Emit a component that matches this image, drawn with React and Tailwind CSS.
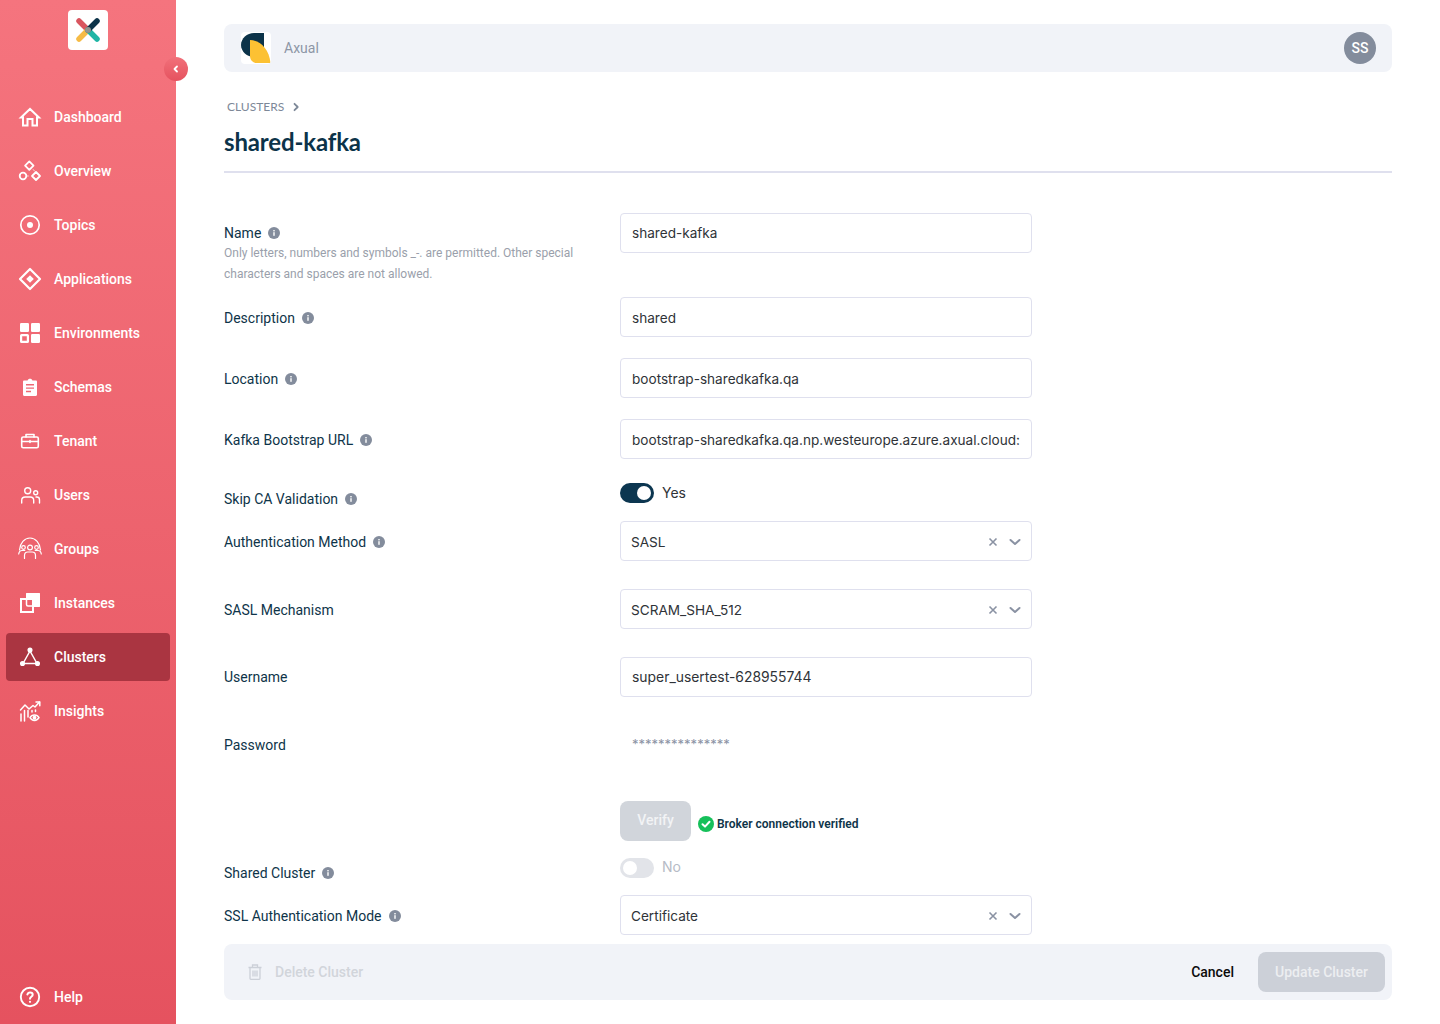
import React from 'react';

const iconProps = { width: 24, height: 24, viewBox: '0 0 24 24', fill: 'none', stroke: 'white', strokeWidth: 1.7, strokeLinejoin: 'round', strokeLinecap: 'round' };

const HomeIcon = () => (
  <svg {...iconProps} strokeWidth={2} strokeLinejoin="miter" strokeLinecap="butt"><path d="M3 12.500 12 4l9 8.500H19V20.500h-4.500V14h-5v6.500H5v-8Z" /></svg>
);
const OverviewIcon = () => (
  <svg {...iconProps} strokeWidth={1.8}>
    <path d="M11.300 2.400 15.500 6.600 11.300 10.800 7.100 6.600Z" />
    <circle cx="5" cy="17" r="3.300" />
    <path d="M18 13 22 17 18 21 14 17Z" />
    <path d="M8.800 17h1.600M15.200 10.500l1.300 1.500" strokeWidth={0.7} />
  </svg>
);
const TopicsIcon = () => (
  <svg {...iconProps}><circle cx="12" cy="12" r="9.200" /><circle cx="12" cy="12" r="3" fill="white" stroke="none" /></svg>
);
const AppsIcon = () => (
  <svg {...iconProps} strokeWidth={2.200}>
    <path d="M12 2 22 12 12 22 2 12Z" />
    <path d="M12 8.200 15.800 12 12 15.800 8.200 12Z" fill="white" stroke="none" />
  </svg>
);
const EnvIcon = () => (
  <svg width="24" height="24" viewBox="0 0 24 24" fill="white">
    <rect x="2" y="2" width="9" height="9" rx="1.200" />
    <rect x="13" y="2" width="9" height="9" rx="1.200" />
    <rect x="13" y="13" width="9" height="9" rx="1.200" />
    <rect x="3.100" y="14.100" width="6.800" height="6.800" rx="0.500" fill="none" stroke="white" strokeWidth="2.200" />
  </svg>
);
const SchemaIcon = () => (
  <svg width="24" height="24" viewBox="0 0 24 24" fill="white">
    <path fillRule="evenodd" d="M6.200 5.500H9.600C9.900 4.400 10.800 3.800 12 3.800s2.100.6 2.400 1.700h3.400c.7 0 1.200.5 1.200 1.200v13.100c0 .7-.5 1.200-1.200 1.200H6.200c-.7 0-1.200-.5-1.200-1.200V6.700c0-.7.5-1.200 1.200-1.200ZM8 9v1.400h8V9H8Zm0 3.400v1.400h8v-1.400H8Zm0 3.400v1.400h5v-1.400H8Z" />
  </svg>
);
const TenantIcon = () => (
  <svg {...iconProps} strokeWidth={1.600}>
    <rect x="3.700" y="8" width="16.600" height="10.800" rx="1.500" />
    <path d="M8 8V5.500h8V8M3.700 12.500h16.600M12 11.500v2" />
  </svg>
);
const UsersIcon = () => (
  <svg {...iconProps} strokeWidth={1.400}>
    <circle cx="9.700" cy="7.700" r="3" />
    <path d="M3.700 20v-2.500c0-2 1.500-3.500 3.500-3.500h5c2 0 3.500 1.500 3.500 3.500V20" />
    <circle cx="17.700" cy="9.700" r="2" />
    <path d="M18 14h.8c1.500 0 2.700 1.200 2.700 2.700V20" />
  </svg>
);
const GroupsIcon = () => (
  <svg {...iconProps} strokeWidth={1.200}>
    <path d="M1.500 13C2 6 6.500 1 12 1s10 5 10.500 12" />
    <circle cx="12" cy="10.500" r="2.400" />
    <circle cx="5.500" cy="10.500" r="1.800" />
    <circle cx="18.500" cy="10.500" r="1.800" />
    <path d="M6.500 21.500v-3c0-2 1.300-3.500 3.300-3.500h4.400c2 0 3.300 1.500 3.300 3.500v3" />
    <path d="M.7 17c.3-2 1.700-3.500 3.300-3.500h2.800M23.300 17c-.3-2-1.700-3.500-3.300-3.500h-2.800" />
  </svg>
);
const InstancesIcon = () => (
  <svg width="24" height="24" viewBox="0 0 24 24" fill="none">
    <path d="M8 2.500c0-.3.2-.5.500-.5h13c.3 0 .5.2.5.5V15.500c0 .3-.2.500-.5.500H16V8.500c0-.8-.7-1.500-1.500-1.500H8V2.500Z" fill="white" />
    <rect x="3" y="8" width="12" height="13" stroke="white" strokeWidth="2" />
    <path d="M8.500 8v5.500c0 .8.700 1.500 1.500 1.500H15" stroke="white" strokeWidth="1.500" />
  </svg>
);
const ClustersIcon = () => (
  <svg {...iconProps} strokeWidth={1.500}>
    <path d="M12 6 5 18.500h14Z" />
    <circle cx="12" cy="5" r="1.800" fill="white" />
    <circle cx="4.500" cy="18.500" r="1.800" fill="white" />
    <circle cx="19.500" cy="18.500" r="1.800" fill="white" />
  </svg>
);
const InsightsIcon = () => (
  <svg {...iconProps} strokeWidth={1.500}>
    <path d="M3 22v-7M6.500 22V11.500M10 18v-6.500" />
    <path d="M2.500 11 7 6l4 4 4-3.500 2 1.500 4.500-5" />
    <path d="M18 3h3.800v3.800" />
    <path d="M12 18.700c1-1.800 2.600-2.700 4.500-2.700s3.500.9 4.500 2.700c-1 1.800-2.600 2.700-4.500 2.700s-3.500-.9-4.500-2.700Z" />
    <circle cx="16.500" cy="18.700" r="1.200" fill="white" />
    <path d="M14 11.500v1.500M17.500 11v1.500" />
  </svg>
);
const HelpIcon = () => (
  <svg {...iconProps} strokeWidth={1.900}>
    <circle cx="12" cy="12" r="9.200" />
    <path d="M9.400 9.500c.3-1.400 1.300-2.100 2.700-2.100 1.500 0 2.600.9 2.600 2.300 0 2.100-2.700 2.100-2.700 4.100" strokeWidth={2} />
    <circle cx="12" cy="16.800" r="1.100" fill="white" stroke="none" />
  </svg>
);

const navItems = [
  { label: 'Dashboard', icon: HomeIcon },
  { label: 'Overview', icon: OverviewIcon },
  { label: 'Topics', icon: TopicsIcon },
  { label: 'Applications', icon: AppsIcon },
  { label: 'Environments', icon: EnvIcon },
  { label: 'Schemas', icon: SchemaIcon },
  { label: 'Tenant', icon: TenantIcon },
  { label: 'Users', icon: UsersIcon },
  { label: 'Groups', icon: GroupsIcon },
  { label: 'Instances', icon: InstancesIcon },
  { label: 'Clusters', icon: ClustersIcon, active: true },
  { label: 'Insights', icon: InsightsIcon },
];

function NavItem({ label, icon: Icon, active }) {
  return (
    <div className={`flex h-12 items-center gap-3 rounded pl-3 text-sm font-medium text-white ${active ? 'bg-[#aa3541]' : ''}`}>
      <Icon />
      <span>{label}</span>
    </div>
  );
}

function Sidebar() {
  return (
    <aside className="relative flex h-screen w-[176px] shrink-0 flex-col bg-gradient-to-b from-[#f5747e] to-[#e5525f] px-1.5 pb-[3px] pt-2.5 font-['Roboto',sans-serif]">
      <div className="mx-auto flex h-10 w-10 items-center justify-center rounded bg-white">
        <svg width="40" height="40" viewBox="0 0 40 40" fill="none" strokeWidth="5.500" strokeLinecap="round">
          <path d="M11 11 20 20" stroke="#d9555f" />
          <path d="M20 20 11 29" stroke="#f6bb45" />
          <path d="M20 20 29 29" stroke="#1fb5a5" />
          <path d="M20 20 29 11" stroke="#0c3349" />
          <circle cx="20" cy="20" r="3" fill="#93958f" />
        </svg>
      </div>
      <button className="absolute left-[164px] top-[57px] flex h-6 w-6 items-center justify-center rounded-full bg-gradient-to-b from-[#f1707a] to-[#e5525f]">
        <svg width="10" height="10" viewBox="0 0 10 10" fill="none" stroke="white" strokeWidth="1.800" strokeLinecap="round" strokeLinejoin="round">
          <path d="M6 2.500 3.500 5 6 7.500" />
        </svg>
      </button>
      <nav className="mt-[43px] flex flex-col gap-1.5">
        {navItems.map((item) => (
          <NavItem key={item.label} {...item} />
        ))}
      </nav>
      <div className="mt-auto">
        <NavItem label="Help" icon={HelpIcon} />
      </div>
    </aside>
  );
}

const InfoDot = () => (
  <span className="ml-[7px] inline-flex h-3 w-3 items-center justify-center rounded-full bg-[#838c9c]">
    <svg width="12" height="12" viewBox="0 0 12 12" fill="white">
      <rect x="5.300" y="5.200" width="1.400" height="3.600" />
      <rect x="5.300" y="3" width="1.400" height="1.400" />
    </svg>
  </span>
);

function Label({ text, info = true, className = 'pt-[11px]' }) {
  return (
    <div className={`box-content flex h-[20px] items-center text-sm text-[#0e3449] ${className}`}>
      <span>{text}</span>
      {info && <InfoDot />}
    </div>
  );
}

function TextInput({ value, className = 'text-[13.6px]' }) {
  return (
    <input
      readOnly
      value={value}
      className={`h-10 w-[412px] rounded border border-[#dfe0ee] bg-white px-[11px] font-['Inter',sans-serif] text-[#2f3338] outline-none ${className}`}
    />
  );
}

function SelectBox({ value }) {
  return (
    <div className="flex h-10 w-[412px] items-center rounded border border-[#dfe0ee] bg-white pl-2.5 pr-[9px] pt-0.5 font-['Inter',sans-serif] text-[13.6px] text-[#2f3338]">
      <span className="flex-1">{value}</span>
      <svg width="10" height="10" viewBox="0 0 10 10" fill="none" stroke="#8a92a3" strokeWidth="1.600">
        <path d="M1.500 1.500l7 7M8.500 1.500l-7 7" />
      </svg>
      <svg className="ml-2.5" width="14" height="14" viewBox="0 0 14 14" fill="none" stroke="#8a92a3" strokeWidth="2" strokeLinecap="round" strokeLinejoin="round">
        <path d="M2.500 5 7 9l4.500-4" />
      </svg>
    </div>
  );
}

function Toggle({ on, text }) {
  return (
    <div className="flex items-start gap-2">
      <div className={`flex h-5 w-[34px] items-center rounded-full px-[3px] ${on ? 'justify-end bg-[#0c3650]' : 'bg-[#e2e4e9]'}`}>
        <div className="h-3.5 w-3.5 rounded-full bg-white" />
      </div>
      <span className={`font-['Inter',sans-serif] text-sm ${on ? 'leading-[20px] text-[#2f3338]' : 'leading-[18px] text-[#b6bbc6]'}`}>{text}</span>
    </div>
  );
}

function Row({ height, label, children }) {
  return (
    <div className={`grid grid-cols-[396px_412px] ${height}`}>
      <div>{label}</div>
      <div>{children}</div>
    </div>
  );
}

function ClusterForm() {
  return (
    <div className="mt-10 min-h-0 flex-1 font-['Roboto',sans-serif]">
      <Row
        height="h-[84px]"
        label={
          <>
            <Label text="Name" className="pt-[10px]" />
            <p className="w-[360px] text-xs leading-[21px] text-[#9a9fab]">
              Only letters, numbers and symbols _-. are permitted. Other special characters and spaces are not allowed.
            </p>
          </>
        }
      >
        <TextInput value="shared-kafka" />
      </Row>
      <Row height="h-[61px]" label={<Label text="Description" />}>
        <TextInput value="shared" className="pt-0.5 text-[13.6px]" />
      </Row>
      <Row height="h-[61px]" label={<Label text="Location" />}>
        <TextInput value="bootstrap-sharedkafka.qa" className="pt-0.5 text-[13.6px]" />
      </Row>
      <Row height="h-[61px]" label={<Label text="Kafka Bootstrap URL" />}>
        <TextInput value="bootstrap-sharedkafka.qa.np.westeurope.azure.axual.cloud:9093" className="pt-0.5 text-[13.6px]" />
      </Row>
      <Row height="h-[41px]" label={<Label text="Skip CA Validation" className="pt-[9px]" />}>
        <div className="pt-[3px]">
          <Toggle on text="Yes" />
        </div>
      </Row>
      <Row height="h-[68px]" label={<Label text="Authentication Method" />}>
        <SelectBox value="SASL" />
      </Row>
      <Row height="h-[68px]" label={<Label text="SASL Mechanism" info={false} />}>
        <SelectBox value="SCRAM_SHA_512" />
      </Row>
      <Row height="h-[68px]" label={<Label text="Username" info={false} className="pt-[10px]" />}>
        <TextInput value="super_usertest-628955744" className="text-[13.9px]" />
      </Row>
      <Row height="h-[76px]" label={<Label text="Password" info={false} className="pt-[10px]" />}>
        <div className="px-3 pt-[9px] font-['Inter',sans-serif] text-[13px] leading-[20px] text-[#8a92a3]">***************</div>
      </Row>
      <Row height="h-[57px]">
        <div className="flex items-center">
          <button className="h-10 w-[71px] rounded-lg bg-[#d1d5db] pb-0.5 text-sm font-medium text-[#f2f3f5]">Verify</button>
          <svg className="ml-[7px] mt-1.5" width="16" height="16" viewBox="0 0 16 16" fill="none">
            <circle cx="8" cy="8" r="8" fill="#16c05a" />
            <path d="M4.500 8.300 7 10.600l4.500-4.800" stroke="white" strokeWidth="2" strokeLinecap="round" strokeLinejoin="round" />
          </svg>
          <span className="ml-[3px] mt-1.5 text-xs font-semibold text-[#0e3449]">Broker connection verified</span>
        </div>
      </Row>
      <Row height="h-[37px]" label={<Label text="Shared Cluster" className="pt-[5px]" />}>
        <Toggle text="No" />
      </Row>
      <Row height="h-10" label={<Label text="SSL Authentication Mode" />}>
        <SelectBox value="Certificate" />
      </Row>
    </div>
  );
}

export default function App() {
  return (
    <div className="flex h-screen overflow-hidden bg-white">
      <Sidebar />
      <main className="flex h-screen min-w-0 flex-1 flex-col px-12 pb-6 pt-6">
        <header className="flex h-12 shrink-0 items-center justify-between rounded-lg bg-[#f1f3f8] pl-[17px] pr-4">
          <div className="flex items-center gap-[13px]">
            <div className="h-8 w-[30px] overflow-hidden rounded-sm bg-white">
              <svg width="30" height="32" viewBox="0 0 30 32" fill="none">
                <path d="M23 1H13C6 1 0 6.500 0 13s6 12 13 12h10Z" fill="#0c3349" />
                <path d="M9 8c9 0 19 8 20.500 23H16c-4 0-7-3-7-7Z" fill="#fcc133" />
              </svg>
            </div>
            <span className="font-['Roboto',sans-serif] text-sm text-[#8d96a6]">Axual</span>
          </div>
          <div className="flex h-8 w-8 items-center justify-center rounded-full bg-[#838c9c] font-['Roboto',sans-serif] text-sm font-medium text-white">SS</div>
        </header>

        <div className="mt-[27px] flex h-4 items-center pl-[3px] font-['Lato',sans-serif] text-xs text-[#7d8898]">
          <span>CLUSTERS</span>
          <svg className="ml-[7px]" width="10" height="10" viewBox="0 0 10 10" fill="none" stroke="#7d8898" strokeWidth="1.800" strokeLinecap="round" strokeLinejoin="round">
            <path d="M3.500 1.800 6.700 5 3.500 8.200" />
          </svg>
        </div>
        <h1 className="mt-[11px] font-['Lato',sans-serif] text-2xl font-bold leading-[32px] tracking-[-0.15px] text-[#0c3349]">shared-kafka</h1>
        <div className="mt-[13px] h-0.5 shrink-0 bg-[#dfe0ee]" />

        <ClusterForm />

        <footer className="flex h-14 shrink-0 items-center rounded-lg bg-[#f1f3f8] pl-6 pr-[7px] font-['Roboto',sans-serif] text-sm font-medium">
          <svg width="14" height="16" viewBox="0 0 14 16" fill="none" stroke="#ccd0d8" strokeWidth="1.300">
            <path d="M.500 3.500h13M2 3.500V14.500c0 .5.300.8.800.8h8.400c.5 0 .8-.3.800-.8V3.500M4.500 3.500V1h5v2.500M5 6.500v6M7 6.500v6M9 6.500v6" />
          </svg>
          <span className="ml-[13px] text-[#d1d5db]">Delete Cluster</span>
          <span className="ml-auto text-[#0b0b0b]">Cancel</span>
          <button className="ml-6 h-10 w-[127px] rounded-lg bg-[#ccd0d8] font-medium text-[#eceef1]">Update Cluster</button>
        </footer>
      </main>
    </div>
  );
}
